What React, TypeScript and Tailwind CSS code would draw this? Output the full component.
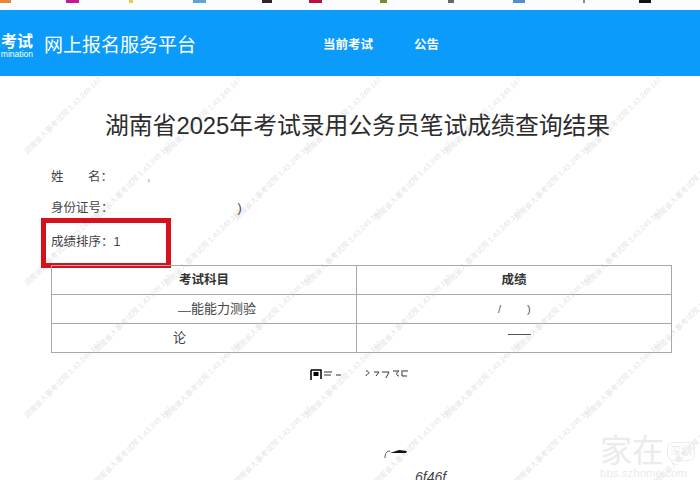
const chips = [
  { left: 0, width: 11, color: "bg-[#e8873a]" },
  { left: 66, width: 13, color: "bg-[#c2189a]" },
  { left: 129, width: 4, color: "bg-[#f0c94a]" },
  { left: 193, width: 13, color: "bg-[#5aa5dc]" },
  { left: 262, width: 10, color: "bg-[#33232b]" },
  { left: 309, width: 13, color: "bg-[#b4123f]" },
  { left: 380, width: 7, color: "bg-[#7b8a30]" },
  { left: 448, width: 6, color: "bg-[#666666]" },
  { left: 513, width: 12, color: "bg-[#4f8fd0]" },
  { left: 583, width: 2, color: "bg-[#888888]" },
  { left: 639, width: 12, color: "bg-[#111111]" },
];

const marks: { x: number; y: number }[] = [];
for (let row = 0; row < 6; row++) {
  for (let col = 0; col < 5; col++) {
    marks.push({ x: 10 + col * 140 + (row % 2) * 70, y: 110 + row * 66 });
  }
}

const Watermark = () => (
  <div className="absolute left-0 top-[76px] h-[404px] w-[700px] overflow-hidden pointer-events-none blur-[0.6px]">
    {marks.map((m, i) => (
      <span
        key={i}
        className="absolute whitespace-nowrap text-[7.5px] text-[#e4e4e4] -rotate-45"
        style={{ left: m.x, top: m.y - 76 }}
      >
        湖南省人事考试院 1.43.249.167
      </span>
    ))}
  </div>
);

export default function App() {
  return (
    <div className="relative h-[480px] w-[700px] overflow-hidden bg-white font-['Liberation_Sans','Noto_Sans_CJK_SC',sans-serif] text-[#333]">
      <Watermark />

      <div className="relative h-[10px] bg-[#fbfdfd]">
        {chips.map((c) => (
          <span key={c.left} className={`absolute top-0 h-[3px] ${c.color}`} style={{ left: c.left, width: c.width }} />
        ))}
      </div>

      <header className="relative flex h-[66px] items-center bg-[#0a9bfb] pt-[5px] text-white">
        <div className="flex w-[33px] flex-col items-end overflow-hidden">
          <span className="text-[16px] font-bold leading-[17px] whitespace-nowrap">考试</span>
          <span className="text-[8.5px] leading-[9px] whitespace-nowrap">mination</span>
        </div>
        <span className="ml-[11px] text-[19px] leading-none">网上报名服务平台</span>
        <nav className="ml-[127px] flex gap-[41px] text-[12.5px] font-bold">
          <span>当前考试</span>
          <span>公告</span>
        </nav>
      </header>

      <main className="relative">
        <h1 className="pl-[105px] pt-[35px] text-[23.8px] leading-[30px] whitespace-nowrap text-[#2c2c2c]">
          湖南省2025年考试录用公务员笔试成绩查询结果
        </h1>

        <div className="relative ml-[51px] mt-[27px] flex h-[97px] flex-col text-[12.5px] leading-[18px] text-[#444]">
          <div className="flex">
            <span className="flex w-[62px] justify-between">
              <span>姓</span>
              <span>名：</span>
            </span>
            <span className="ml-[34px] text-[#999]">,</span>
          </div>
          <div className="mt-[13px] flex">
            <span>身份证号：</span>
            <span className="ml-[124px]">)</span>
          </div>
          <div className="mt-[16px]">成绩排序：1</div>
          <div className="absolute left-[-10px] top-[50px] h-[50px] w-[130px] border-[5px] border-[#d8101c]" />
        </div>

        <table className="relative ml-[51px] w-[621px] table-fixed border-collapse text-[13px] text-[#444]">
          <colgroup>
            <col className="w-[305px]" />
            <col />
          </colgroup>
          <tbody>
            <tr className="h-[29px]">
              <th className="border border-[#a8a8a8] text-center text-[12.5px] font-bold text-[#333]">考试科目</th>
              <th className="border border-[#a8a8a8] text-center text-[12.5px] font-bold text-[#333]">成绩</th>
            </tr>
            <tr className="h-[29px]">
              <td className="border border-[#a8a8a8] pl-[126px]">
                <span className="inline-block h-px w-[13px] translate-y-[-1px] bg-[#666]" />
                能能力测验
              </td>
              <td className="border border-[#a8a8a8]">
                <div className="flex gap-[26px] pl-[141px] text-[11px] leading-none text-[#555]">
                  <span>/</span>
                  <span>)</span>
                </div>
              </td>
            </tr>
            <tr className="h-[29px]">
              <td className="border border-[#a8a8a8] pl-[121px]">论</td>
              <td className="border border-[#a8a8a8]">
                <div className="ml-[151px] h-px w-[23px] -translate-y-[4px] bg-[#555]" />
              </td>
            </tr>
          </tbody>
        </table>

        <svg className="ml-[309px] mt-[14px] block" width="100" height="14" viewBox="0 0 100 14" fill="none" stroke="#333" strokeWidth="1">
          <path d="M2 3h10v9M2 3v10" stroke="#000" strokeWidth="1.5" />
          <rect x="4.5" y="5" width="5" height="4" fill="#000" stroke="none" />
          <path d="M15 5h8M15 8h7M27 8h5M57 4c2 0 3 1 3 2s-3 1-3 3M65 5h5l-3 4M73 5h7l-3 6M84 4h6c-3 1-3 5 0 5M92 4h7M93 5v4h5" />
        </svg>
        <svg className="ml-[384px] mt-[66px] block" width="26" height="12" viewBox="0 0 26 12" fill="none">
          <path d="M1 11c0-5 2-7 5-7" stroke="#555" />
          <path d="M6 6l9-3 8 1-1 2-9 0z" fill="#111" />
        </svg>
        <div className="ml-[415px] mt-[11px] text-[14px] italic leading-[14px] text-[#444]">6f46f</div>
      </main>

      <div className="absolute left-[600px] top-[435px] flex flex-col items-start text-[#ebebeb] pointer-events-none">
        <div className="flex items-center">
          <span className="text-[32px] leading-[32px]">家在</span>
          <span className="ml-[3px] rounded-[6px] border border-[#ebebeb] px-[2px] text-[11px] leading-[17px]">深圳</span>
        </div>
        <span className="text-[11.5px] leading-[12px] whitespace-nowrap">bbs.szhome.com</span>
      </div>
    </div>
  );
}
